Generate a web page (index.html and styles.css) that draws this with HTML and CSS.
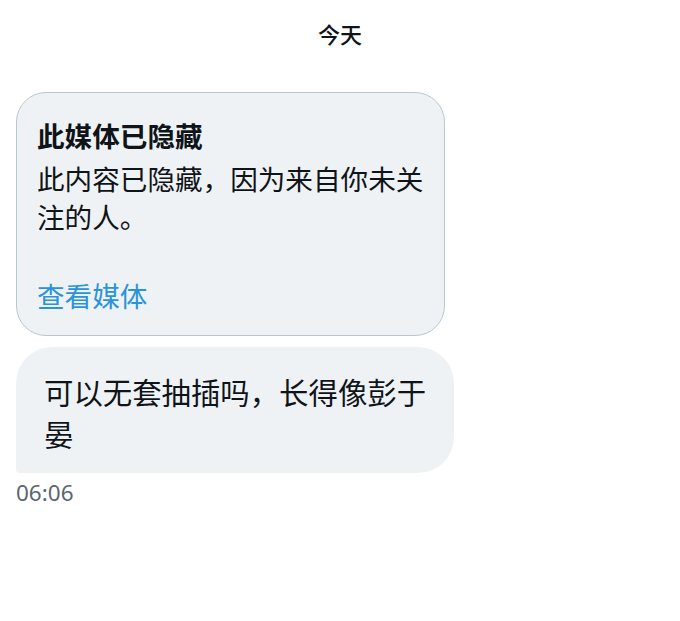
FILE: index.html
```html
<!DOCTYPE html>
<html lang="zh-CN">
<head>
  <meta charset="UTF-8" />
  <meta name="viewport" content="width=device-width, initial-scale=1.0"/>
  <title>私信</title>
  <link rel="stylesheet" href="styles.css">
</head>
<body>
  <div class="chat">
    <div class="day">今天</div>

    <!-- hidden media card -->
    <div class="hidden-card">
      <div class="hidden-title">此媒体已隐藏</div>
      <div class="hidden-text">此内容已隐藏，因为来自你未关注的人。</div>
      <a class="hidden-link" href="#">查看媒体</a>
    </div>

    <div class="bubble">可以无套抽插吗，长得像彭于晏</div>
    <div class="time">06:06</div>
  </div>
</body>
</html>
```

FILE: styles.css
```css
body {
  margin: 0;
  background: #ffffff;
  color: #0f1419;
  font-family: "Noto Sans CJK SC", "Noto Sans", sans-serif;
}

.chat {
  padding: 0 16px;
}

.day {
  margin-top: 18px;
  line-height: 30px;
  font-size: 22px;
  font-weight: 500;
  text-align: center;
}

.hidden-card {
  width: 429px;
  margin-top: 44px;
  padding: 23px 12px 21px 20px;
  box-sizing: border-box;
  background: #eff2f4;
  border: 1px solid #b9c7d0;
  border-radius: 30px;
  font-size: 27.6px;
  line-height: 38px;
}

.hidden-title {
  font-weight: 700;
}

.hidden-text {
  margin-top: 5px;
}

.hidden-link {
  display: block;
  margin-top: 41px;
  color: #2b94d8;
  text-decoration: none;
}

.bubble {
  width: 438px;
  margin-top: 11px;
  padding: 23px 26px 19px 28px;
  box-sizing: border-box;
  background: #eff2f4;
  border-radius: 36px 36px 36px 4px;
  font-size: 29.4px;
  line-height: 42px;
}

.time {
  margin-top: 8px;
  font-family: "Noto Sans", sans-serif;
  font-size: 22.5px;
  line-height: 24px;
  color: #5b6670;
}
```
